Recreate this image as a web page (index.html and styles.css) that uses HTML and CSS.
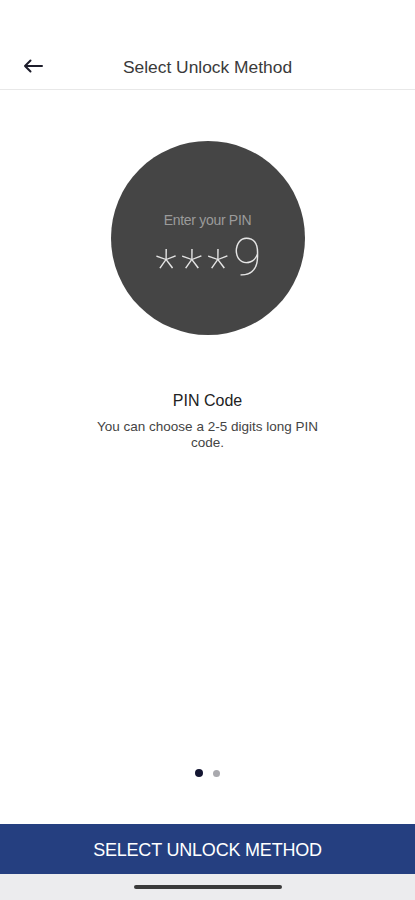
FILE: index.html
```html
<!DOCTYPE html>
<html lang="en">
<head>
    <meta charset="UTF-8">
    <meta name="viewport" content="width=device-width, initial-scale=1.0">
    <title>Select Unlock Method</title>
    <link rel="stylesheet" href="styles.css">
</head>
<body>
    <div class="screen">
        <header class="top-bar">
            <button class="back-btn" aria-label="Back">
                <svg width="20" height="14" viewBox="0 0 20 14">
                    <path d="M19 7H2M7.5 1.5L2 7l5.5 5.5" fill="none" stroke="#1d1d2b" stroke-width="2" stroke-linecap="round" stroke-linejoin="round"/>
                </svg>
            </button>
            <h1 class="top-title">Select Unlock Method</h1>
        </header>

        <main class="method">
            <div class="pin-circle">
                <span class="pin-label">Enter your PIN</span>
                <span class="pin-value"><span class="pin-mask">***</span>9</span>
            </div>
            <h2 class="method-title">PIN Code</h2>
            <p class="method-desc">You can choose a 2-5 digits long PIN code.</p>
        </main>

        <div class="dots">
            <span class="dot active"></span>
            <span class="dot"></span>
        </div>

        <button class="select-btn">SELECT UNLOCK METHOD</button>

        <div class="home-area">
            <span class="home-bar"></span>
        </div>
    </div>
</body>
</html>
```

FILE: styles.css
```css
* {
    margin: 0;
    padding: 0;
    box-sizing: border-box;
}

body {
    background: #fff;
    font-family: "Liberation Sans", Arial, sans-serif;
    color: #222;
}

.screen {
    height: 900px;
    display: flex;
    flex-direction: column;
}

.top-bar {
    position: relative;
    height: 90px;
    padding-top: 45px;
    border-bottom: 1px solid #e8e8e8;
    display: flex;
    align-items: center;
    justify-content: center;
}

.back-btn {
    position: absolute;
    left: 23px;
    top: 59px;
    background: none;
    border: none;
    display: flex;
}

.top-title {
    font-size: 17.4px;
    font-weight: normal;
    color: #3a3a3a;
}

.method {
    flex: 1;
    display: flex;
    flex-direction: column;
    align-items: center;
    padding-top: 51px;
}

.pin-circle {
    width: 194px;
    height: 194px;
    border-radius: 50%;
    background: #454545;
    display: flex;
    flex-direction: column;
    align-items: center;
    justify-content: center;
    padding-top: 29px;
}

.pin-label {
    font-size: 14px;
    color: #9b9b9b;
    letter-spacing: -0.3px;
}

.pin-value {
    margin-top: 4px;
    font-family: Roboto, sans-serif;
    font-weight: 100;
    font-size: 52px;
    line-height: 52px;
    color: #e6e6e6;
    margin-left: 2px;
}

.pin-mask {
    letter-spacing: 5px;
    vertical-align: -0.2em;
    font-size: 50px;
}

.method-title {
    font-size: 16px;
    font-weight: normal;
    color: #222;
    margin-top: 57px;
}

.method-desc {
    width: 248px;
    margin-top: 9px;
    font-size: 13.5px;
    line-height: 16px;
    color: #444;
    text-align: center;
}

.dots {
    display: flex;
    justify-content: center;
    align-items: center;
    gap: 10px;
    margin-bottom: 47px;
}

.dot {
    width: 7px;
    height: 7px;
    border-radius: 50%;
    background: #a9a9ae;
}

.dot.active {
    width: 8px;
    height: 8px;
    background: #141632;
}

.select-btn {
    height: 50px;
    padding-top: 2px;
    border: none;
    background: #253f80;
    color: #fff;
    font-family: "Liberation Sans", Arial, sans-serif;
    font-size: 18px;
    letter-spacing: -0.2px;
}

.home-area {
    height: 26px;
    background: #ececee;
    display: flex;
    justify-content: center;
    align-items: center;
}

.home-bar {
    width: 148px;
    height: 4px;
    border-radius: 2px;
    background: #3a3a3a;
}
```
